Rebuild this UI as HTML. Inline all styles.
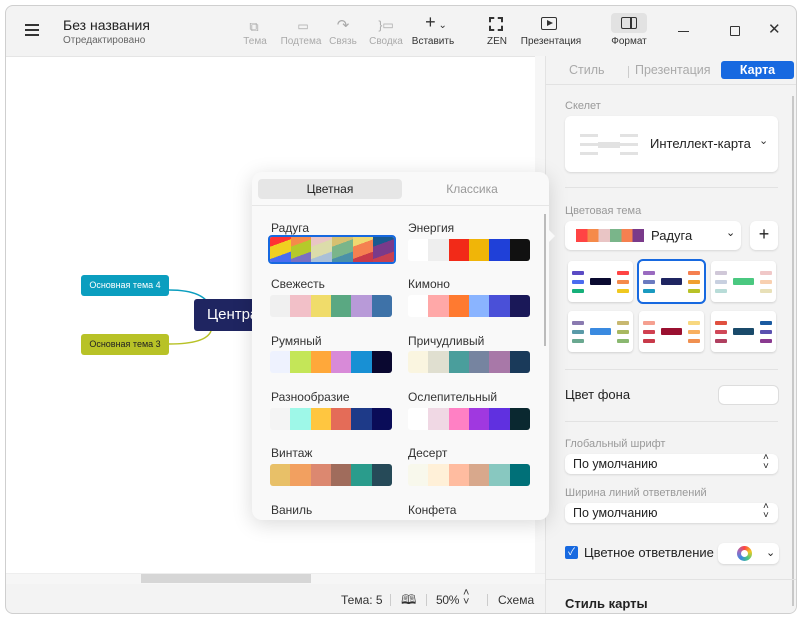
<!DOCTYPE html>
<html><head><meta charset="utf-8"><style>
*{box-sizing:border-box;margin:0;padding:0}
body{width:800px;height:619px;background:#fff;font-family:"Liberation Sans","Noto Sans CJK SC",sans-serif;position:relative;overflow:hidden;color:#222}
.a{position:absolute}
.win{left:5px;top:5px;width:792px;height:609px;border:1px solid #cfcfcf;border-radius:8px;background:#f3f3f3;overflow:hidden}
.tb{font-size:10px;color:#aaa;text-align:center}
.lbl{font-size:11px;color:#999}
.sw{display:flex;height:25px;border-radius:3px;overflow:hidden;width:124px}
.sw div{flex:1}
.nm{font-size:12px;color:#333}
.card{background:#fff;border-radius:6px;box-shadow:0 1px 2px rgba(0,0,0,.12)}
.th{width:65px;height:41px;background:#fff;border-radius:4px;box-shadow:0 1px 2px rgba(0,0,0,.15)}
.th i{position:absolute;display:block;height:4px;width:12px;border-radius:1px}
.th b{position:absolute;display:block;left:22px;top:17px;width:21px;height:7px;border-radius:1px}
.sel{font-size:12.5px;color:#222;padding-left:8px;line-height:20px}
</style></head><body>
<div class="a win">
 <div class="a" style="left:19px;top:18px;width:14px;height:2px;background:#333;box-shadow:0 5px 0 #333,0 10px 0 #333"></div>
 <div class="a" style="left:57px;top:11px;font-size:14px;color:#222">Без названия</div>
 <div class="a" style="left:57px;top:29px;font-size:10px;color:#666">Отредактировано</div>
 <div class="a tb" style="left:233px;top:13px;width:30px;font-size:13px">⧉</div>
 <div class="a tb" style="left:234px;top:30px;width:30px">Тема</div>
 <div class="a tb" style="left:272px;top:13px;width:50px;font-size:12px">▭</div>
 <div class="a tb" style="left:270px;top:30px;width:50px">Подтема</div>
 <div class="a tb" style="left:322px;top:10px;width:30px;font-size:15px">↷</div>
 <div class="a tb" style="left:322px;top:30px;width:30px">Связь</div>
 <div class="a tb" style="left:360px;top:12px;width:40px;font-size:12px">}▭</div>
 <div class="a tb" style="left:360px;top:30px;width:40px">Сводка</div>
 <div class="a" style="left:405px;top:6px;width:50px;text-align:center;font-size:18px;color:#333">+<span style="font-size:10px"> ⌄</span></div>
 <div class="a tb" style="left:402px;top:30px;width:50px;color:#333">Вставить</div>
 <div class="a" style="left:483px;top:11px;width:14px;height:14px;border:2px dashed #333"></div>
 <div class="a tb" style="left:476px;top:30px;width:30px;color:#333">ZEN</div>
 <div class="a" style="left:535px;top:11px;width:16px;height:13px;border:1.5px solid #333;border-radius:2px"></div>
 <div class="a" style="left:541px;top:14px;width:0;height:0;border-left:6px solid #333;border-top:3.5px solid transparent;border-bottom:3.5px solid transparent"></div>
 <div class="a tb" style="left:510px;top:30px;width:70px;color:#333">Презентация</div>
 <div class="a" style="left:605px;top:7px;width:36px;height:20px;background:#e2e2e2;border-radius:4px"></div>
 <div class="a" style="left:615px;top:11px;width:16px;height:12px;border:1.5px solid #333;border-radius:2px"></div>
 <div class="a" style="left:624px;top:11px;width:1.5px;height:12px;background:#333"></div>
 <div class="a tb" style="left:598px;top:30px;width:50px;color:#333">Формат</div>
 <div class="a" style="left:672px;top:25px;width:11px;height:1px;background:#333"></div>
 <div class="a" style="left:724px;top:20px;width:10px;height:10px;border:1px solid #333;border-radius:1px"></div>
 <div class="a" style="left:762px;top:14px;font-size:15px;color:#333">✕</div>

 <div class="a" style="left:0;top:50px;width:539px;height:528px;background:#fff;border-top:1px solid #e5e5e5"></div>
 <div class="a" style="left:529px;top:50px;width:10px;height:517px;background:#f6f6f6"></div>
 <div class="a" style="left:0;top:567px;width:539px;height:11px;background:#f6f6f6;border-top:1px solid #eee"></div>
 <div class="a" style="left:135px;top:568px;width:170px;height:9px;background:#d6d6d6"></div>
 <svg class="a" style="left:0;top:0" width="540" height="580">
  <path d="M163 284 Q200 284 205 303" stroke="#0b9ebf" stroke-width="1.5" fill="none"/>
  <path d="M163 338 Q200 338 205 325" stroke="#b8c227" stroke-width="1.5" fill="none"/>
 </svg>
 <div class="a" style="left:75px;top:269px;width:88px;height:21px;background:#0b9ebf;border-radius:3px;color:#fff;font-size:9px;line-height:21px;text-align:center">Основная тема 4</div>
 <div class="a" style="left:75px;top:328px;width:88px;height:21px;background:#b8c227;border-radius:3px;color:#222;font-size:9px;line-height:21px;text-align:center">Основная тема 3</div>
 <div class="a" style="left:188px;top:293px;width:65px;height:32px;background:#1f2561;border-radius:3px;color:#fff;font-size:15px;line-height:32px;padding-left:13px;overflow:hidden">Центра</div>

 <div class="a" style="left:335px;top:587px;font-size:12px;color:#333">Тема: 5</div>
 <div class="a" style="left:384px;top:588px;width:1px;height:12px;background:#ccc"></div>
 <div class="a" style="left:395px;top:585px;font-size:13px;color:#333">🕮</div>
 <div class="a" style="left:420px;top:588px;width:1px;height:12px;background:#ccc"></div>
 <div class="a" style="left:430px;top:587px;font-size:12px;color:#333;letter-spacing:-0.3px">50%</div>
 <div class="a" style="left:457px;top:583px;font-size:11px;color:#333;line-height:9px">˄<br>˅</div>
 <div class="a" style="left:481px;top:588px;width:1px;height:12px;background:#ccc"></div>
 <div class="a" style="left:492px;top:587px;font-size:12px;color:#333">Схема</div>

 <div class="a" style="left:539px;top:50px;width:253px;height:559px;background:#f3f3f3;border-left:1px solid #e3e3e3"></div>
 <div class="a" style="left:563px;top:57px;font-size:12.5px;color:#aaa">Стиль</div>
 <div class="a" style="left:622px;top:60px;width:1px;height:12px;background:#ccc"></div>
 <div class="a" style="left:629px;top:57px;font-size:12.5px;color:#aaa">Презентация</div>
 <div class="a" style="left:715px;top:55px;width:73px;height:18px;background:#1769e0;border-radius:3px;color:#fff;font-size:12.5px;font-weight:bold;text-align:center;line-height:18px">Карта</div>
 <div class="a" style="left:539px;top:78px;width:253px;height:1px;background:#e2e2e2"></div>
 <div class="a" style="left:786px;top:90px;width:2px;height:510px;background:#c8c8c8"></div>
 <div class="a lbl" style="left:559px;top:94px">Скелет</div>
 <div class="a card" style="left:559px;top:110px;width:213px;height:56px"></div>
 <svg class="a" style="left:574px;top:128px" width="60" height="22"><g fill="#e2e2e2"><rect x="0" y="0" width="18" height="3"/><rect x="0" y="9" width="18" height="3"/><rect x="0" y="18" width="18" height="3"/><rect x="18" y="8" width="22" height="6"/><rect x="40" y="0" width="18" height="3"/><rect x="40" y="9" width="18" height="3"/><rect x="40" y="18" width="18" height="3"/></g></svg>
 <div class="a" style="left:644px;top:130px;font-size:13px;color:#222">Интеллект-карта</div>
 <div class="a" style="left:753px;top:128px;font-size:11px;color:#333">⌄</div>
 <div class="a" style="left:559px;top:181px;width:213px;height:1px;background:#e2e2e2"></div>
 <div class="a lbl" style="left:559px;top:199px">Цветовая тема</div>
 <div class="a card" style="left:559px;top:215px;width:176px;height:29px"></div>
 <div class="a" style="left:570px;top:223px;width:68px;height:13px;background:linear-gradient(90deg,#f44 0 17%,#f58a4a 17% 33%,#e9c5c5 33% 50%,#7ab58a 50% 67%,#f58050 67% 83%,#7a3a8a 83%)"></div>
 <div class="a" style="left:645px;top:222px;font-size:13px">Радуга</div>
 <div class="a" style="left:720px;top:220px;font-size:11px">⌄</div>
 <div class="a card" style="left:744px;top:215px;width:28px;height:29px;text-align:center;font-size:18px;line-height:27px">+</div>

 <div class="a th" style="left:562px;top:255px"><i style="left:4px;top:10px;background:#5b4bc4"></i><i style="left:4px;top:19px;background:#4a6cf0"></i><i style="left:4px;top:28px;background:#16b07a"></i><b style="background:#0a0a30"></b><i style="left:49px;top:10px;background:#f44"></i><i style="left:49px;top:19px;background:#f58a4a"></i><i style="left:49px;top:28px;background:#f0c820"></i></div>
 <div class="a th" style="left:633px;top:255px;outline:2px solid #1769e0"><i style="left:4px;top:10px;background:#9a6ac0"></i><i style="left:4px;top:19px;background:#6a7ac0"></i><i style="left:4px;top:28px;background:#1a9ac0"></i><b style="background:#1f2561"></b><i style="left:49px;top:10px;background:#f58050"></i><i style="left:49px;top:19px;background:#f0a030"></i><i style="left:49px;top:28px;background:#b8c227"></i></div>
 <div class="a th" style="left:705px;top:255px"><i style="left:4px;top:10px;background:#d0c8d8"></i><i style="left:4px;top:19px;background:#c8d0e0"></i><i style="left:4px;top:28px;background:#b8dcd8"></i><b style="background:#4ac880"></b><i style="left:49px;top:10px;background:#f0c8c8"></i><i style="left:49px;top:19px;background:#f8d0b0"></i><i style="left:49px;top:28px;background:#e8e0b8"></i></div>
 <div class="a th" style="left:562px;top:305px"><i style="left:4px;top:10px;background:#8a7ab0"></i><i style="left:4px;top:19px;background:#5a9aa8"></i><i style="left:4px;top:28px;background:#6aa890"></i><b style="background:#3a8ae0"></b><i style="left:49px;top:10px;background:#c8b870"></i><i style="left:49px;top:19px;background:#a8b860"></i><i style="left:49px;top:28px;background:#8ab870"></i></div>
 <div class="a th" style="left:633px;top:305px"><i style="left:4px;top:10px;background:#f5a090"></i><i style="left:4px;top:19px;background:#d04050"></i><i style="left:4px;top:28px;background:#c83a4a"></i><b style="background:#9a1030"></b><i style="left:49px;top:10px;background:#f8d880"></i><i style="left:49px;top:19px;background:#f8b060"></i><i style="left:49px;top:28px;background:#f09050"></i></div>
 <div class="a th" style="left:705px;top:305px"><i style="left:4px;top:10px;background:#e05040"></i><i style="left:4px;top:19px;background:#d04858"></i><i style="left:4px;top:28px;background:#b04060"></i><b style="background:#1a4a6a"></b><i style="left:49px;top:10px;background:#1a5aa0"></i><i style="left:49px;top:19px;background:#5a50b0"></i><i style="left:49px;top:28px;background:#8a3a90"></i></div>

 <div class="a" style="left:559px;top:363px;width:213px;height:1px;background:#e2e2e2"></div>
 <div class="a" style="left:559px;top:381px;font-size:13px">Цвет фона</div>
 <div class="a card" style="left:712px;top:379px;width:61px;height:20px;border:1px solid #ddd;box-shadow:none"></div>
 <div class="a" style="left:559px;top:415px;width:213px;height:1px;background:#e2e2e2"></div>
 <div class="a lbl" style="left:559px;top:432px">Глобальный шрифт</div>
 <div class="a card sel" style="left:559px;top:448px;width:213px;height:20px">По умолчанию</div>
 <div class="a" style="left:757px;top:447px;font-size:10px;line-height:9px">˄<br>˅</div>
 <div class="a lbl" style="left:559px;top:481px">Ширина линий ответвлений</div>
 <div class="a card sel" style="left:559px;top:497px;width:213px;height:20px">По умолчанию</div>
 <div class="a" style="left:757px;top:496px;font-size:10px;line-height:9px">˄<br>˅</div>
 <div class="a" style="left:559px;top:540px;width:13px;height:13px;background:#1769e0;border-radius:2px;color:#fff;font-size:10px;text-align:center;line-height:13px">✓</div>
 <div class="a" style="left:578px;top:539px;font-size:13px">Цветное ответвление</div>
 <div class="a card" style="left:712px;top:537px;width:61px;height:21px"></div>
 <div class="a" style="left:731px;top:540px;width:15px;height:15px;border-radius:50%;background:conic-gradient(#f44,#f0c820,#4ac880,#3a8ae0,#9a6ac0,#f44)"></div>
 <div class="a" style="left:735px;top:544px;width:7px;height:7px;border-radius:50%;background:#fff"></div>
 <div class="a" style="left:760px;top:540px;font-size:11px">⌄</div>
 <div class="a" style="left:539px;top:573px;width:253px;height:1px;background:#e2e2e2"></div>
 <div class="a" style="left:559px;top:590px;font-size:13px;font-weight:bold">Стиль карты</div>
</div>

<div class="a" style="left:252px;top:172px;width:297px;height:348px;background:#f9f9f9;border-radius:10px;box-shadow:0 4px 20px rgba(0,0,0,.15)">
 <div class="a" style="left:6px;top:7px;width:144px;height:20px;background:#e6e6e6;border-radius:4px;text-align:center;font-size:12px;line-height:20px;color:#222">Цветная</div>
 <div class="a" style="left:150px;top:7px;width:140px;text-align:center;font-size:12px;line-height:20px;color:#999">Классика</div>
 <div class="a" style="left:0;top:33px;width:297px;height:1px;background:#e6e6e6"></div>
 <div class="a" style="left:292px;top:42px;width:2px;height:132px;background:#bbb"></div>
</div>
<div class="a" style="left:548px;top:229px;width:0;height:0;border-left:7px solid #f9f9f9;border-top:7px solid transparent;border-bottom:7px solid transparent"></div>

<div class="a nm" style="left:271px;top:221px">Радуга</div>
<div class="a" style="left:268px;top:235px;width:128px;height:29px;border:2px solid #1769e0;border-radius:4px"></div>
<div class="a sw" style="left:270px;top:237px;width:124px;border-radius:2px">
 <div style="background:linear-gradient(160deg,#f33 0 30%,#f0d020 30% 68%,#4a6cf0 68%)"></div>
 <div style="background:linear-gradient(160deg,#f58a4a 0 30%,#b5c92a 30% 68%,#7a70c0 68%)"></div>
 <div style="background:linear-gradient(160deg,#e9c5c5 0 30%,#dcdcaa 30% 68%,#aac0d8 68%)"></div>
 <div style="background:linear-gradient(160deg,#d7c070 0 30%,#7ab58a 30% 68%,#4a90a8 68%)"></div>
 <div style="background:linear-gradient(160deg,#f0d870 0 30%,#f58050 30% 68%,#c83a4a 68%)"></div>
 <div style="background:linear-gradient(160deg,#1a5a90 0 30%,#7a3a8a 30% 68%,#c84050 68%)"></div>
</div>
<div class="a nm" style="left:408px;top:221px">Энергия</div>
<div class="a sw" style="left:408px;top:239px;width:122px;height:22px"><div style="background:#fff"></div><div style="background:#eee"></div><div style="background:#f22a18"></div><div style="background:#f0b508"></div><div style="background:#1f40d8"></div><div style="background:#111"></div></div>

<div class="a nm" style="left:271px;top:277px">Свежесть</div>
<div class="a sw" style="left:270px;top:295px;width:122px;height:22px"><div style="background:#f0f0f0"></div><div style="background:#f2c0c8"></div><div style="background:#f0dc6a"></div><div style="background:#5aa882"></div><div style="background:#b89ad8"></div><div style="background:#3e72a8"></div></div>
<div class="a nm" style="left:408px;top:277px">Кимоно</div>
<div class="a sw" style="left:408px;top:295px;width:122px;height:22px"><div style="background:#fff"></div><div style="background:#ffa8a8"></div><div style="background:#ff7a30"></div><div style="background:#8ab4ff"></div><div style="background:#4a50d8"></div><div style="background:#1a1858"></div></div>

<div class="a nm" style="left:271px;top:334px">Румяный</div>
<div class="a sw" style="left:270px;top:351px;width:122px;height:22px"><div style="background:#eef2fe"></div><div style="background:#c4e658"></div><div style="background:#ffa83a"></div><div style="background:#d88ad8"></div><div style="background:#1890d4"></div><div style="background:#0a0830"></div></div>
<div class="a nm" style="left:408px;top:334px">Причудливый</div>
<div class="a sw" style="left:408px;top:351px;width:122px;height:22px"><div style="background:#faf5e0"></div><div style="background:#e0dfd0"></div><div style="background:#4a9e9c"></div><div style="background:#7684a0"></div><div style="background:#a878a8"></div><div style="background:#1a3a5a"></div></div>

<div class="a nm" style="left:271px;top:390px">Разнообразие</div>
<div class="a sw" style="left:270px;top:408px;width:122px;height:22px"><div style="background:#f4f4f4"></div><div style="background:#9ef8e8"></div><div style="background:#ffc640"></div><div style="background:#e46c58"></div><div style="background:#1e3a88"></div><div style="background:#0a0c58"></div></div>
<div class="a nm" style="left:408px;top:390px">Ослепительный</div>
<div class="a sw" style="left:408px;top:408px;width:122px;height:22px"><div style="background:#fff"></div><div style="background:#f0d8e4"></div><div style="background:#ff80c4"></div><div style="background:#a038e0"></div><div style="background:#6030e0"></div><div style="background:#0a2830"></div></div>

<div class="a nm" style="left:271px;top:446px">Винтаж</div>
<div class="a sw" style="left:270px;top:464px;width:122px;height:22px"><div style="background:#e8c068"></div><div style="background:#f2a060"></div><div style="background:#dc8870"></div><div style="background:#a06c5c"></div><div style="background:#2a9c8c"></div><div style="background:#264a58"></div></div>
<div class="a nm" style="left:408px;top:446px">Десерт</div>
<div class="a sw" style="left:408px;top:464px;width:122px;height:22px"><div style="background:#f8f8ec"></div><div style="background:#fff0d8"></div><div style="background:#ffbca0"></div><div style="background:#d8a88c"></div><div style="background:#88c8c0"></div><div style="background:#007078"></div></div>

<div class="a nm" style="left:271px;top:503px">Ваниль</div>
<div class="a nm" style="left:408px;top:503px">Конфета</div>
</body></html>
